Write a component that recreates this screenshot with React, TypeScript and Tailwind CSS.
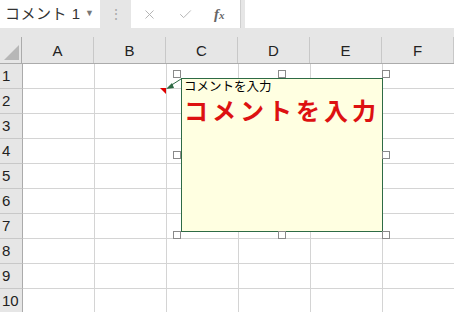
import { X, Check } from "lucide-react";

// Excel sheet with a selected comment box (comment shape in edit mode)

const cols = ["A", "B", "C", "D", "E", "F"];
const rows = [1, 2, 3, 4, 5, 6, 7, 8, 9, 10];

function Handle({ x, y }: { x: number; y: number }) {
  return (
    <div
      className="absolute w-[8px] h-[8px] bg-white border border-[#8a8a8a]"
      style={{ left: x - 4, top: y - 4 }}
    />
  );
}

export default function App() {
  const font = { fontFamily: "'Liberation Sans', 'Noto Sans CJK JP', sans-serif" };
  return (
    <div className="relative w-[454px] h-[312px] overflow-hidden bg-[#e6e6e6]" style={font}>
      {/* formula bar */}
      <div className="flex h-[28px]">
        <div className="w-[100px] bg-white flex items-center pl-[5px] pr-[6px] text-[15px] text-[#333]">
          <span className="flex-1 tracking-[0.5px]">コメント 1</span>
          <span className="text-[9px] text-[#777]">▼</span>
        </div>
        <div className="w-[31px] flex items-center justify-center text-[#aaa] text-[14px]">⋮</div>
        <div className="w-[109px] bg-white flex items-center text-[#b0b0b0]">
          <X className="w-[15px] h-[15px] ml-[11px]" strokeWidth={1.5} />
          <Check className="w-[15px] h-[15px] ml-[21px]" strokeWidth={1.5} />
          <span
            className="ml-[21px] text-[15px] italic font-bold text-[#666]"
            style={{ fontFamily: "'Liberation Serif', serif" }}
          >
            f<span className="text-[11px]">x</span>
          </span>
        </div>
        <div className="w-[5px] border-l border-[#cfcfcf]" />
        <div className="flex-1 bg-white" />
      </div>
      <div className="h-[9px]" />

      {/* grid */}
      <div className="bg-white">
        <div className="flex h-[27px] bg-[#e6e6e6] border-b border-[#ababab]">
          <div className="w-[23px] border-r border-[#ababab] relative">
            <div className="absolute right-[2px] bottom-[3px] w-0 h-0 border-l-[15px] border-l-transparent border-b-[15px] border-b-[#b7b7b7]" />
          </div>
          {cols.map((c) => (
            <div
              key={c}
              className="w-[72px] shrink-0 border-r border-[#c8c8c8] flex items-center justify-center text-[15px] text-[#222] pt-[2px]"
            >
              {c}
            </div>
          ))}
        </div>
        {rows.map((r) => (
          <div key={r} className="flex h-[25px]">
            <div className="w-[23px] shrink-0 bg-[#e6e6e6] border-r border-b border-[#ababab] border-b-[#c8c8c8] flex items-center pl-[2px] text-[15px] text-[#222]">
              {r}
            </div>
            {cols.map((c) => (
              <div key={c} className="w-[72px] shrink-0 border-r border-b border-[#d4d4d4]" />
            ))}
          </div>
        ))}
      </div>

      {/* comment indicator on B2 */}
      <div className="absolute left-[160px] top-[88px] w-0 h-0 border-l-[6px] border-l-transparent border-t-[6px] border-t-[#e00000]" />

      {/* leader arrow */}
      <svg className="absolute left-0 top-0" width="454" height="312">
        <line x1="181" y1="79" x2="170" y2="86" stroke="#2e6b45" strokeWidth="1" />
        <polygon points="166,89 172,83 174,88" fill="#2e6b45" />
      </svg>

      {/* comment box */}
      <div className="absolute left-[181px] top-[78px] w-[202px] h-[154px] bg-[#ffffe1] border border-[#2e6b45] pl-[2px] pt-[1px]">
        <div className="text-[12.5px] leading-[14px] text-black">コメントを入力</div>
        <div className="text-[24px] leading-[28px] font-bold text-[#dd1111] tracking-[4px] mt-[4px] whitespace-nowrap">
          コメントを入力
        </div>
      </div>

      <Handle x={177} y={74} />
      <Handle x={282} y={74} />
      <Handle x={386} y={74} />
      <Handle x={177} y={155} />
      <Handle x={386} y={155} />
      <Handle x={177} y={235} />
      <Handle x={282} y={235} />
      <Handle x={386} y={235} />
    </div>
  );
}
